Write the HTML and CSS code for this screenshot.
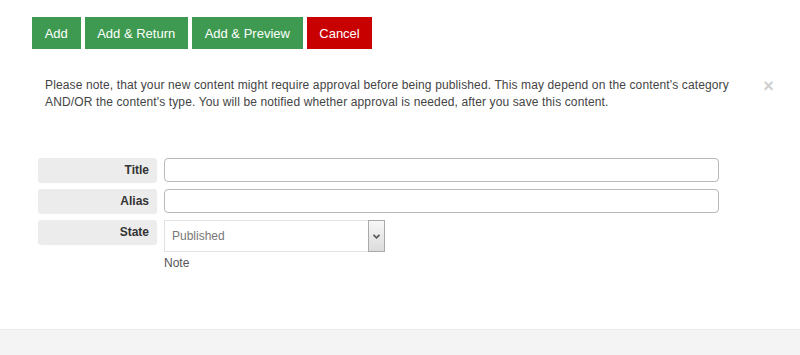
FILE: index.html
```html
<!DOCTYPE html>
<html lang="en">
<head>
  <meta charset="UTF-8" />
  <title>Add Content</title>
  <link rel="stylesheet" href="styles.css">
</head>
<body>
  <div class="page">
    <div class="toolbar">
      <button class="btn btn-green">Add</button>
      <button class="btn btn-green">Add &amp; Return</button>
      <button class="btn btn-green">Add &amp; Preview</button>
      <button class="btn btn-red">Cancel</button>
    </div>

    <div class="notice">
      Please note, that your new content might require approval before being published. This may depend on the content's category AND/OR the content's type. You will be notified whether approval is needed, after you save this content.
      <span class="close">&times;</span>
    </div>

    <div class="form">
      <div class="row">
        <label class="label" for="title">Title</label>
        <input class="text" type="text" id="title" />
      </div>
      <div class="row">
        <label class="label" for="alias">Alias</label>
        <input class="text" type="text" id="alias" />
      </div>
      <div class="row">
        <label class="label" for="state">State</label>
        <div class="field">
          <div class="select-wrap">
            <select id="state" class="select">
              <option>Published</option>
              <option>Unpublished</option>
            </select>
            <span class="select-arrow">
              <svg width="7" height="5" viewBox="0 0 7 5"><path d="M0.5 0.8 L3.5 3.8 L6.5 0.8" fill="none" stroke="#555" stroke-width="1.6"/></svg>
            </span>
          </div>
          <div class="note">Note</div>
        </div>
      </div>
    </div>
  </div>
  <div class="footer"></div>
</body>
</html>
```

FILE: styles.css
```css
html, body {
  height: 100%;
}

body {
  margin: 0;
  font-family: "Liberation Sans", Arial, sans-serif;
  background: #fff;
  color: #333;
  display: flex;
  flex-direction: column;
}

.page {
  padding: 17px 15px 0 32px;
}

.toolbar {
  display: flex;
  gap: 4px;
}

.btn {
  height: 32px;
  padding: 0 12.7px;
  border: none;
  color: #fff;
  font-family: inherit;
  font-size: 13px;
  cursor: pointer;
}

.btn-green {
  background: #3e9a50;
}

.btn-red {
  background: #c90000;
}

.notice {
  position: relative;
  margin-top: 20px;
  padding: 8px 45px 8px 13px;
  font-size: 12px;
  line-height: 17px;
  letter-spacing: 0.13px;
  color: #444;
}

.close {
  position: absolute;
  top: 9px;
  right: 11px;
  font-size: 18px;
  line-height: 17px;
  font-weight: bold;
  color: #cfcfcf;
}

.form {
  margin-top: 39px;
  padding-left: 6px;
  display: flex;
  flex-direction: column;
  gap: 7px;
}

.row {
  display: flex;
  align-items: flex-start;
  gap: 7px;
}

.label {
  width: 111px;
  height: 24px;
  line-height: 24px;
  padding-right: 8px;
  text-align: right;
  font-size: 12px;
  font-weight: bold;
  color: #333;
  background: #ececec;
  border-radius: 3px;
  box-shadow: 0 1px 1px rgba(0,0,0,0.08);
}

.text {
  width: 555px;
  height: 24px;
  box-sizing: border-box;
  margin: 0;
  border: 1px solid #b9b9b9;
  border-radius: 4px;
  padding: 2px 6px;
  font-family: inherit;
  font-size: 12px;
}

.select-wrap {
  position: relative;
  width: 221px;
  height: 32px;
}

.select {
  width: 100%;
  height: 100%;
  margin: 0;
  padding: 0 7px;
  box-sizing: border-box;
  appearance: none;
  -webkit-appearance: none;
  border: 1px solid #e2e2e2;
  background: #fff;
  font-family: inherit;
  font-size: 12px;
  color: #777;
}

.select-arrow {
  position: absolute;
  top: 0;
  right: 0;
  width: 17px;
  height: 32px;
  box-sizing: border-box;
  border: 1px solid #aaa;
  background: linear-gradient(#f7f7f7, #dcdcdc);
  display: flex;
  align-items: center;
  justify-content: center;
}

.note {
  margin-top: 4px;
  font-size: 12px;
  color: #555;
}

.footer {
  margin-top: auto;
  height: 25px;
  background: #f4f4f4;
  border-top: 1px solid #ebebeb;
}
```
